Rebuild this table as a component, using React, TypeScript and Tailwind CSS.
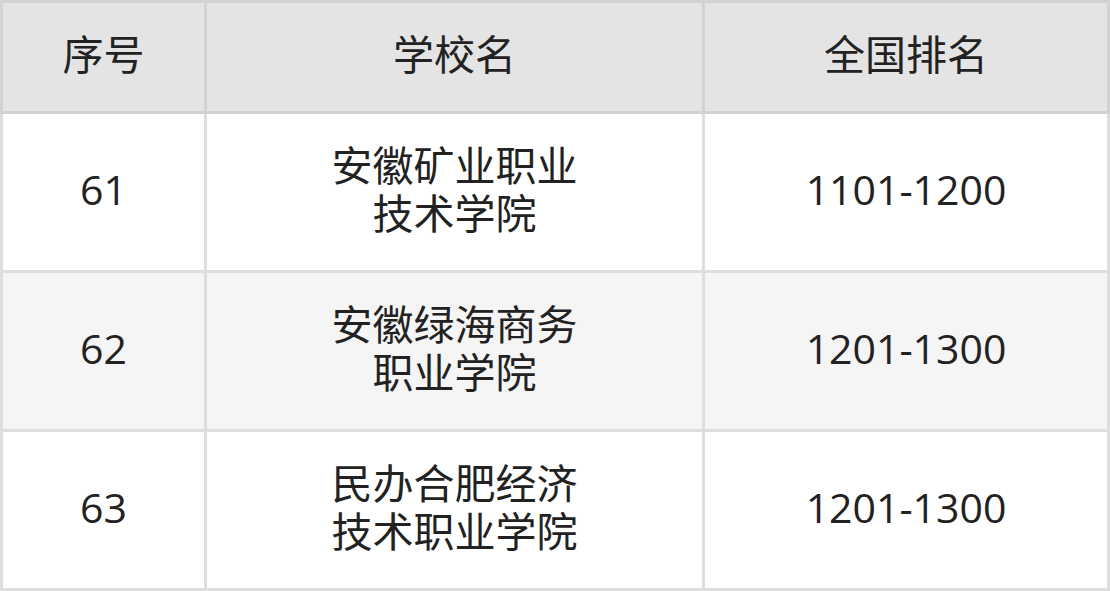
const rows = [
  { no: '61', name: ['安徽矿业职业', '技术学院'], rank: '1101-1200' },
  { no: '62', name: ['安徽绿海商务', '职业学院'], rank: '1201-1300' },
  { no: '63', name: ['民办合肥经济', '技术职业学院'], rank: '1201-1300' },
]

export default function App() {
  return (
    <div
      className="w-[1110px] h-[591px] flex flex-col text-[#222] text-[41px] leading-[48px]"
      style={{ fontFamily: '"Open Sans", "Noto Sans CJK SC", sans-serif' }}
    >
      <div className="flex gap-[3px] bg-[#d2d2d2] p-[3px]">
        <div className="w-[201px] h-[108px] pb-[6px] bg-[#e4e4e4] flex items-center justify-center">序号</div>
        <div className="w-[495px] h-[108px] pb-[6px] bg-[#e4e4e4] flex items-center justify-center">学校名</div>
        <div className="w-[402px] h-[108px] pb-[6px] bg-[#e4e4e4] flex items-center justify-center">全国排名</div>
      </div>
      <div className="flex flex-col gap-[3px] bg-[#dedede] px-[3px] pb-[3px]">
        {rows.map((r, i) => (
          <div key={r.no} className="flex gap-[3px]">
            <div className={`w-[201px] h-[156px] pb-[6px] flex items-center justify-center ${i % 2 === 1 ? 'bg-[#f5f5f5]' : 'bg-white'}`}>
              {r.no}
            </div>
            <div className={`w-[495px] h-[156px] pb-[6px] flex flex-col items-center justify-center text-center ${i % 2 === 1 ? 'bg-[#f5f5f5]' : 'bg-white'}`}>
              {r.name.map((line) => (
                <span key={line}>{line}</span>
              ))}
            </div>
            <div className={`w-[402px] h-[156px] pb-[6px] flex items-center justify-center ${i % 2 === 1 ? 'bg-[#f5f5f5]' : 'bg-white'}`}>
              {r.rank}
            </div>
          </div>
        ))}
      </div>
    </div>
  )
}
